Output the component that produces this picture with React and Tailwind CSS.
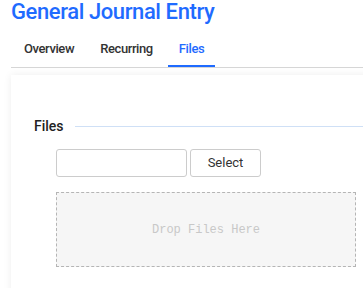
import { useState } from 'react';

const tabs = ['Overview', 'Recurring', 'Files'];

export default function App() {
  const [activeTab, setActiveTab] = useState('Files');

  return (
    <div className="h-[288px] w-[363px] overflow-hidden bg-white pl-[11px] font-['Roboto',sans-serif]">
      {/* PAGE TITLE */}
      <h1 className="text-[22px] font-medium leading-[24px] tracking-[-0.4px] text-[#1f6bff]">
        General Journal Entry
      </h1>

      {/* TABS */}
      <nav className="mt-[11px] flex gap-[4px] border-b border-[#d6d6d6] pl-[2px]">
        {tabs.map((tab) => {
          const isActive = tab === activeTab;
          return (
            <button
              key={tab}
              onClick={() => setActiveTab(tab)}
              className={`border-b-2 px-[11px] pb-[6px] pt-[4px] text-[13px] font-medium leading-[20px] tracking-[-0.4px] ${
                isActive ? 'border-[#1f6bff] text-[#1f6bff]' : 'border-transparent text-[#333]'
              }`}
            >
              {tab}
            </button>
          );
        })}
      </nav>

      {/* CARD */}
      <div className="mt-[7px] h-[300px] w-[400px] bg-white pl-[23px] pt-[41px] shadow-[0_0_8px_rgba(0,0,0,0.07)]">
        <div className="flex items-center gap-[11px]">
          <span className="text-[14px] font-medium leading-[20px] text-[#222]">Files</span>
          <div className="h-px flex-1 bg-[#cfe0f6]" />
        </div>

        <div className="mt-[13px] pl-[22px]">
          <div className="flex gap-[3px]">
            <input className="h-[28px] w-[131px] rounded-[3px] border border-[#cccccc] bg-white px-2 text-[13px] outline-none" />
            <button className="h-[28px] w-[71px] rounded-[3px] border border-[#cccccc] bg-white text-[13px] text-[#333]">
              Select
            </button>
          </div>

          <div className="mt-[15px] flex h-[75px] w-[300px] items-center justify-center border border-dashed border-[#b5b5b5] bg-[#f6f6f6]">
            <span className="font-['Liberation_Mono',monospace] text-[12px] text-[#c8c8c8]">Drop Files Here</span>
          </div>
        </div>
      </div>
    </div>
  );
}
